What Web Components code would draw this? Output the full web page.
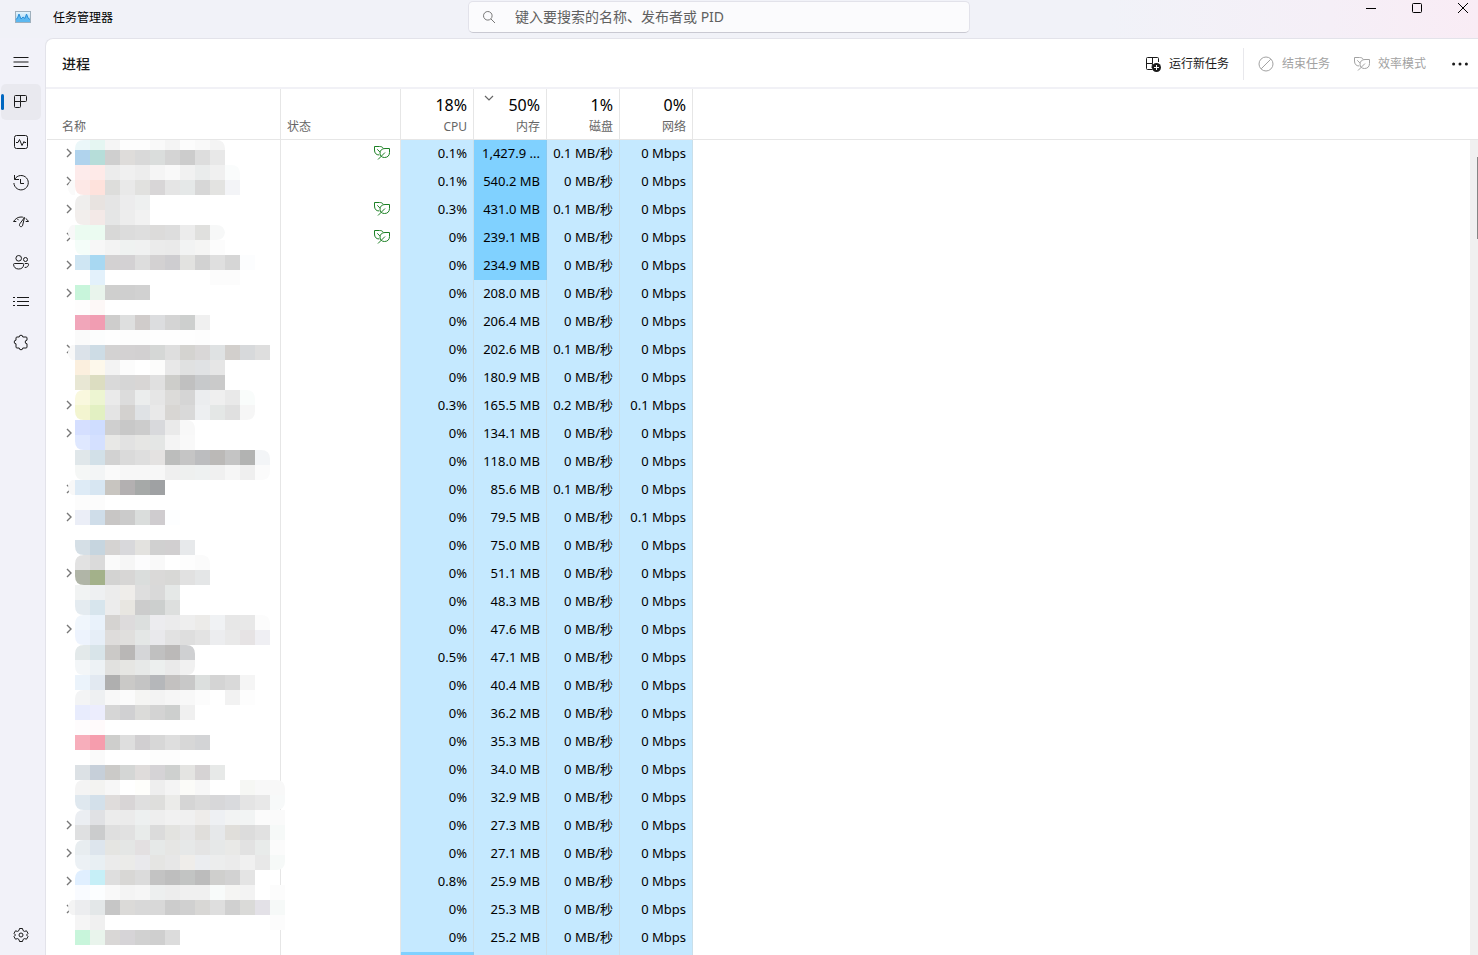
<!DOCTYPE html>
<html lang="zh-CN">
<head>
<meta charset="utf-8">
<title>任务管理器</title>
<style>
  html, body { margin: 0; height: 100%; overflow: hidden; }
  body { font: 12px/16px "Noto Sans", "Noto Sans CJK SC", sans-serif; color: #1a1a1a; background: #f1f2f8; }
</style>
</head>
<body>
<task-manager></task-manager>

<script>
const ICONS = {
  menu: '<path d="M.5 3.500h15M.5 8h15M.5 12.500h15" />',
  processes: '<path d="M2.5 1.5h10a1 1 0 0 1 1 1v4a1 1 0 0 1-1 1h-5v5a1 1 0 0 1-1 1h-4a1 1 0 0 1-1-1v-10a1 1 0 0 1 1-1zM7.5 1.5v6M1.5 7.5h6"/>',
  performance: '<rect x="1.5" y="1.5" width="13" height="13" rx="2"/><path d="M3 8.5h2l1.5-3 2.5 6 2-4 .5 1H13"/>',
  history: '<path d="M1.5 1v4.5H6M1.8 5.2A7.2 7.2 0 1 1 .9 9M7.5 5v4.5H11"/>',
  startup: '<path d="M.5 7.500C2.500 4.600 5 3 8 3c1 0 1.800.1 2.500.4M.5 7.500h2.800M5.500 6.200 4.500 5M12.700 4.500c1.200.700 2.100 1.700 2.800 3h-2.800M11.500 3.500 6.800 9.800c-1.300 2.200 1.200 4 2.700 2z"/>',
  users: '<circle cx="5.700" cy="4.300" r="2.800"/><circle cx="12.500" cy="5.500" r="2"/><path d="M1.500 9.500h8.400c.5 0 .8.3.8.8 0 3-2 4.700-5 4.700S.6 13.300.6 10.300c0-.5.4-.8.9-.8zM11.800 9.500h2.900c.5 0 .8.3.8.8 0 2-1.300 3.200-3.800 3.200"/>',
  details: '<path d="M4 3.500h12M4 7.500h12M4 11.500h12M0 3.500h2M0 7.500h2M0 11.500h2"/>',
  services: '<path d="M4 3h2.200a1.800 1.800 0 0 1 3.600 0H13a1 1 0 0 1 1 1v2.200a1.800 1.800 0 1 0 0 3.600V13a1 1 0 0 1-1 1H9.800a1.800 1.800 0 0 1-3.600 0H4a1 1 0 0 1-1-1V9.800a1.800 1.800 0 0 1 0-3.600V4a1 1 0 0 1 1-1z"/>',
  settings: '<circle cx="8" cy="8" r="2"/><path d="M6.500 1.500h3l.5 2 1.500.9 2-.6 1.500 2.600L13.500 8l1.500 1.600-1.500 2.600-2-.6-1.500.9-.5 2h-3l-.5-2-1.500-.9-2 .6L1 9.600 2.500 8 1 6.400l1.500-2.600 2 .6L6 3.500z" stroke-linejoin="round"/>',
  search: '<circle cx="6.800" cy="6.800" r="4.300"/><path d="m10 10 4 4"/>',
  run: '<path d="M7.500 13.500h-5a1 1 0 0 1-1-1v-10a1 1 0 0 1 1-1h10a1 1 0 0 1 1 1V6M7.500 1.500v6M1.500 7.500h6M7.500 7.500 7 12"/><circle cx="11.500" cy="11.500" r="4.500" fill="currentColor" stroke="none"/><path d="M9 11.500h5M11.500 9v5" stroke="#fff"/>',
  end: '<circle cx="8" cy="8" r="7"/><path d="m3.200 12.800 9.600-9.600"/>',
  leaf: '<path d="M9.200 3.200C8.500 2 7.300 1.500 5.500 1.500h-5V5c0 3.200 1.600 4.900 4.800 5M15.500 3.500H11C8 3.500 6 5.300 6 8.200c0 2.700 1.800 4.300 4.500 4.300 3.200 0 5-2 5-5zM4 14.500 11 7.500M3.300 4.300 5.900 7"/>',
  more: '<g fill="currentColor" stroke="none"><circle cx="1.600" cy="8" r="1.500"/><circle cx="8" cy="8" r="1.500"/><circle cx="14.400" cy="8" r="1.500"/></g>',
  minimize: '<path d="M3 8.500h10"/>',
  maximize: '<rect x="3.500" y="3.500" width="9" height="9" rx="1"/>',
  close: '<path d="m3 3 10 10M13 3 3 13"/>',
  expand: '<path d="m6 4 4 4-4 4" stroke-width="1.400"/>',
  sort: '<path d="m4 6 4 4 4-4" stroke-width="1.200"/>',
  app: '<defs><linearGradient id="g" x2="0" y2="1"><stop offset="0" stop-color="#e9f6fd"/><stop offset="1" stop-color="#8fd0f5"/></linearGradient></defs><g transform="translate(0 -1)"><rect x=".5" y="2.500" width="15" height="11" fill="url(#g)" stroke="#9fb0bd"/><path d="M1 12V9.500l1.500-.5L4 5l2 5 2-2 2 1.500L11.500 5 13 9l2 1.500V13H1z" fill="#5cb8f0" stroke="none"/><path d="M1 10.500 2.500 9 4 5l2 5 2-2 2 1.500L11.500 5 13 9l2 1.500" stroke="#2b8fd8"/></g>'
};

const define = (name, css, html, setup) => {
  const template = document.createElement('template');
  template.innerHTML = `<style>*{box-sizing:border-box}${css}</style>${html}`;
  customElements.define(name, class extends HTMLElement {
    constructor() {
      super();
      this.attachShadow({ mode: 'open' }).append(template.content.cloneNode(true));
    }
    connectedCallback() { if (setup) setup(this, this.shadowRoot); }
  });
};

define('ui-icon',
  `:host{display:block;flex:none;width:16px;height:16px}
   svg{display:block;width:100%;height:100%;overflow:visible;fill:none;stroke:currentColor}`,
  `<svg viewBox="0 0 16 16" aria-hidden="true"></svg>`,
  (host, root) => { root.querySelector('svg').innerHTML = ICONS[host.getAttribute('name')]; });

define('title-bar',
  `:host{display:flex;align-items:flex-start;height:38px;position:relative;overflow:hidden;
     background:linear-gradient(90deg,#f1f2f8 0 75%,#f5eff7 90%,#f9ecf5 100%)}
   .app{display:flex;align-items:center;gap:22px;padding:10px 0 0 15px;color:#000}
   label{position:absolute;left:calc(50% - 20px);transform:translateX(-50%);top:1px;width:min(34%,502px);height:32px;
     display:flex;align-items:center;gap:18px;padding:0 12px;background:#fbfbfd;border:1px solid #e2e2ea;border-bottom-color:#c9c9d2;border-radius:5px;color:#777}
   input{flex:1;min-width:0;border:0;outline:0;padding:0;background:none;font:14px/20px "Noto Sans","Noto Sans CJK SC",sans-serif;color:#1a1a1a}
   input::placeholder{color:#606060;opacity:1}
   .controls{display:flex;margin:0 -8px 0 auto;color:#000}
   button{width:46px;height:16px;padding:0;border:0;background:none;color:inherit;display:flex;justify-content:center;align-items:center}`,
  `<div class="app"><ui-icon name="app"></ui-icon><span>任务管理器</span></div>
   <label><ui-icon name="search"></ui-icon><input type="text" aria-label="搜索" placeholder="键入要搜索的名称、发布者或 PID"></label>
   <div class="controls">
     <button aria-label="最小化"><ui-icon name="minimize"></ui-icon></button>
     <button aria-label="最大化"><ui-icon name="maximize"></ui-icon></button>
     <button aria-label="关闭"><ui-icon name="close"></ui-icon></button>
   </div>`);

define('rail-button',
  `:host{display:block}
   button{position:relative;display:flex;align-items:center;justify-content:center;width:40px;height:36px;padding:0;border:0;border-radius:5px;background:none;color:#1a1a1a}
   :host([selected]) button{background:#e9e9ef}
   :host([selected]) button::before{content:"";position:absolute;left:0;top:10px;width:3px;height:16px;border-radius:2px;background:#0067c0}`,
  `<button><ui-icon></ui-icon></button>`,
  (host, root) => {
    root.querySelector('ui-icon').shadowRoot.querySelector('svg').innerHTML = ICONS[host.getAttribute('icon')];
    root.querySelector('button').setAttribute('aria-label', host.getAttribute('label'));
  });

define('nav-rail',
  `:host{display:flex;flex-direction:column;gap:4px;padding:6px 0 2px 1px;background:#f2f2f9}
   .end{margin-top:auto}`,
  `<rail-button icon="menu" label="打开导航"></rail-button>
   <rail-button icon="processes" label="进程" selected></rail-button>
   <rail-button icon="performance" label="性能"></rail-button>
   <rail-button icon="history" label="应用历史记录"></rail-button>
   <rail-button icon="startup" label="启动应用"></rail-button>
   <rail-button icon="users" label="用户"></rail-button>
   <rail-button icon="details" label="详细信息"></rail-button>
   <rail-button icon="services" label="服务"></rail-button>
   <rail-button class="end" icon="settings" label="设置"></rail-button>`);

define('page-toolbar',
  `:host{display:flex;align-items:center;height:50px;padding:2px 10px 0 16px;border-bottom:2px solid #f1f1f6}
   h1{margin:0 auto 0 0;font-size:14px;line-height:20px;font-weight:500}
   button{display:flex;align-items:center;gap:8px;padding:0;border:0;background:none;font:inherit;color:#1a1a1a;white-space:nowrap}
   button:disabled{color:#a2a2a2}
   i{width:1px;height:32px;margin:0 14px;background:#e8e8ec}
   .gap{margin-left:24px}
   .more{margin-left:26px}`,
  `<h1>进程</h1>
   <button><ui-icon name="run"></ui-icon>运行新任务</button><i></i>
   <button disabled><ui-icon name="end"></ui-icon>结束任务</button>
   <button class="gap" disabled><ui-icon name="leaf"></ui-icon>效率模式</button>
   <button class="more" aria-label="更多选项"><ui-icon name="more"></ui-icon></button>`);

/* Redacted names: 15px blocks, one line per 15px band.
   Line format: corners|left bump|colours; corners a,b,c,d = top-left, top-right, bottom-right, bottom-left. */
const MOSAIC = `
ab||ebf7f9 e5f6f2 f5f5f5 fdfdfd fdfdfd f9f9f9 f4f4f4 fcfcfc f9f9f9 f4f4f4
||b0d3ed b6ddd9 cfcfcf dedcda d9d9d9 dadddc d4d4d4 cccccc dddddd e8e8e8
b||fdebeb feeae8 ececec f0f0f0 ededed f5f5f5 f9f9f9 f1f1f1 eaecec f0f0f0 fafcfc
d|fafafa|fde8e6 fee2dc dddddb e9e9e9 e1e1df d8d6d7 e5e5e5 e5e8e8 d7d7d7 e3e3e1 f3f4f7
a||efeeed e8e3e0 e5e5e5 ececed eef0f0
d||f2eeec f3e9e7 e5e6e6 ededed f2f2f2
bc|f8f8f8|ebfbf1 ebfbf1 d8d8d7 dcdcdc dedede dcdbda dddddd ececec e0e0de f7f8f8
d||f4fdf9 f7f7f7 f3f3f3 eff2f1 f0f1f1 ebebeb eaeaea f2f3f3 f5f5f4 fcfcfc
||cfe6f3 a8d8f2 d3d1d2 d3d1d3 dddddd d3d1d2 cecdd0 e2e2e0 d2d2d2 dfdfdf d6d6d6 fcfdfe
||- e3f1fb - - - - - - - fcfcfc fcfcfc
||c8f5db e9f4ec cfcfce cfcfcf d1d1d1
||fefdfd fdf8f7
||f1a6ba f19db2 cecdcc dedfdf d0cccb dcdddf d4d4d4 cdcfce f0f0f0
||fafafa fcfdfd fefefe fdfdfd fdfdfd fefefe fefefe fefefe fdfdfd
|f8f8f8|dbe2e9 cddce5 d3d2d2 d3d1d2 d2d0d1 d5d7d6 dedede d4d3d0 d9d7d7 dfe2e3 d2cfcc d7d9db dedede
||fbefde fdf8eb f3f3f3 fcfcfc ffffff fcfcfb e8e8e8 e0e1e1 e0e2e4 e6e6e6
||e8e7d4 dcddc1 d9d9d9 d6d6d6 d8d6d5 e0e0e0 cdcdca c0c0c0 c7c9cb cacaca
ab||f9f8de edf5d2 eaeaea dcdcdc ebeded e6e6e6 dcdbd9 d5d5d5 ebedef efefef e9e9e9 f9fcfb
cd||f3f5d0 e2f0c2 e4e4e4 d3d1cf dfe2e5 e9e9e9 d8d6d3 d9d9d9 edeff1 e4e7e6 e0e0e0 f6f6f6
b||d5dfff cfddff cfcfcf c8c8c8 cccccc d8d9dc eaeaea f8f8f8
d||dfe8ff d4e0ff e8e8e6 e2e2e2 e6e6e4 e4e6e5 f4f4f4 f9f9f9
b||e0e7ea d2e0e8 d2d2d2 dadada dedede e4e2e1 bcbdbc c5c5c5 bcbdbf bbb9b7 c4c4c4 b2b3b2 f3f5f7
cd||f5f7f6 f3f5f6 fafafa f7f7f7 f7f7f7 f7f7f7 efefef eef0ef eef1f1 f0f0f0 f6f6f6 efefef fbfbfb
|f8f8f8|deebf6 d7e6f2 c8c5c0 b3b0b1 a6a9a8 9fa1a3
||fcfcfc fcfcfc
||ebeef7 cfdde9 c8c6c5 cbcbcb dadddc cfcccf fdfeff
||-
d||d5dfe6 c6d5df d5d3d2 d8d8db e3e2df d0d0d0 d1cfd0 e7e9eb
ab||e2e2e2 dadada fafafa f6f6f6 fcfcfd f9f9f9 ffffff fdfdfd fbfbfb
d||b0b5a7 a3b18a d3d3d2 d7d6d5 dadddc dad9d8 d8d8d6 e1e1e1 e4e6e7
||f1f3f3 eef0f2 ececec efedea dedede d9d9d9 e5e8e7
d||e4ebf0 d7e5ed ececec e8e6e1 cccccc cccfce dddfde
ab||f0f6fc e9f2fb d5d3d1 dddbdc dcdfde ececef ebebec eeeeee ecebe9 f0f2f4 e7e7e7 e8e8e8 fcfcfc
d||edf3fd e6eef7 dedcdb e0dfdd e4e7e6 e9e9ec e2e2e2 dedede e3e3e3 ecedef e9e9e9 e6e3e4 efeff3
ab||e3e9ea d8e4e9 cbc9c7 b9b7b6 d5d6d8 c0c0c0 bbb9b8 cfd0d2
cd||f3f6f8 edf2f5 e1e1df e6e6e3 e7e9e8 ecefee eaeaea f1f1f1
||ebf3fb e2e9f1 afafaf cac9c7 c4c4c4 b5b7ba c3c1c0 c8c8c8 dcdfde d4d4d4 d9d9d9 f5f5f5
a||f3f4f5 eef0f2 f8f8f8 fbfbfb f5f5f3 f3f3f3 f6f6f6 f8f8f8 fcfcfc - f2f2f2 fdfdfd
||e8ecfd ecedfd d6d6d6 d0d0d2 dbdbd9 d3d3d3 cdcfce f0f0f0
||fefcfd fffafb
||f7aebb f69dad cececc dedede d1cfd1 d7d7d7 dedede d7d7d7 d3d4d6
||- fafafa - - - fdfdfd fdfdfd
||dce1e5 c6cfd9 cbcac8 d4d6d5 dfdcdb d5d3d6 ced0cf e4e4e2 d6d3d4 e7e9e8
ab||f4f4f4 f3f3f1 f7f7f7 ffffff fefefb eeeeee f4f4f4 fbfbf8 f7f7f7 - - f6f7f4 f8f8f8 f8f8f8
cd||dfe8ef d3e0ea dfdcdb d8d5d6 dfdfdf dededc ebebe9 d5d5d5 dadada d7d7d9 d9dadd e4e4e4 e8e8e8 f7f9f9
a||ebeef2 e0e1e4 ececec ebebeb edf0f0 eeeeee f1f1f1 f0f0f0 eeecea eef0f3 f2f3f3 f2f4f4 fbfbfb fafafa
||dfe0e1 cbcccd dfdfdf e1e1e1 e8ebea dbdbdb e3e3e0 e6e6e6 e0dedb e6e8ea e0deda dcdcdc e1e1e1 f6f9f8
a||e8edf0 dde5ed e5e5e2 e4e6e5 e3e0e1 e6e9e8 e6e6e4 e6e8e8 e4e4e4 e6e8e8 e9e9e7 e2e2e2 e8ebea fbfbfb
cd||ecf1f5 e8eff3 ebebeb ebebe9 e9e9ec e5e5e3 e7e7e7 efedea ebedf0 eceded ebebeb f0f0f0 e8e8e8 f6f9f8
a||e0efff c6eff7 dedede d8d7d5 dbdbdb c3c3c3 bebebe c2c4c3 bcbcbc cfcfcd d2d2d2 e4e4e4
||f9fbff fcfeff f9f9f9 f4f4f4 f6f6f6 edefef ededed f0f0f0 f0f0f0 f8fbfa f5f5f3 f3f3f3 - fcfcfc
|f4f4f4|ecedef e3e7e8 c6c6c6 dbdad8 d8d8d8 d8d8d8 cccccc d0d0d0 d8d7d5 dedede d0d0d0 dadad8 e3e1e7 f6f9f8
||f5f5f5 f0f0f0 - - - - - - - - - - - fcfcfc
||c8f5db e9f4ec d9d7d6 d6d4d7 d1d1d1 cfcfcf dcdcdc`.trim().split('\n');

define('name-mosaic',
  `:host{display:block;pointer-events:none}svg{display:block}`,
  `<svg width="220" height="820" viewBox="0 0 220 820" aria-hidden="true"></svg>`,
  (host, root) => {
    const size = 15, inset = 8;
    let out = '';
    MOSAIC.forEach((line, row) => {
      const [corners, bump, list] = line.split('|');
      const cells = list.split(' ');
      const y = row * size - 5, top = Math.max(y, 0), h = y + size - top;
      if (bump) out += `<path d="M8 ${y}v${h}h-3q-4-3-4-7.500t4-7.500z" fill="#${bump}"/>`;
      cells.forEach((colour, col) => {
        if (colour === '-') return;
        const first = col === 0, last = col === cells.length - 1;
        const r = (k, on) => on && corners.includes(k) ? 9 : 0;
        const a = r('a', first), d = r('d', first), b = r('b', last), c = r('c', last);
        const x = inset + col * size;
        out += `<path fill="#${colour}" d="M${x + a} ${top}H${x + size - b}q${b} 0 ${b} ${b}V${top + h - c}q0 ${c} ${-c} ${c}H${x + d}q${-d} 0 ${-d} ${-d}V${top + a}q0 ${-a} ${a} ${-a}z"/>`;
      });
    });
    root.querySelector('svg').innerHTML = out;
  });

const MEMORY = ['1,427.9 ...', '540.2 MB', '431.0 MB', '239.1 MB', '234.9 MB', '208.0 MB', '206.4 MB', '202.6 MB', '180.9 MB', '165.5 MB', '134.1 MB', '118.0 MB', '85.6 MB', '79.5 MB', '75.0 MB', '51.1 MB', '48.3 MB', '47.6 MB', '47.1 MB', '40.4 MB', '36.2 MB', '35.3 MB', '34.0 MB', '32.9 MB', '27.3 MB', '27.1 MB', '25.9 MB', '25.3 MB', '25.2 MB', ''];
const CPU = { 0: '0.1%', 1: '0.1%', 2: '0.3%', 9: '0.3%', 18: '0.5%', 26: '0.8%' };
const DISK = { 0: '0.1', 2: '0.1', 7: '0.1', 9: '0.2', 12: '0.1' };
const NETWORK = { 9: '0.1', 13: '0.1' };
const GROUPS = new Set([0, 1, 2, 3, 4, 5, 7, 9, 10, 12, 13, 15, 17, 24, 25, 26, 27]);
const EFFICIENT = new Set([0, 2, 3]);

define('process-table',
  `:host{display:block;position:relative;overflow:hidden;min-height:0;margin-left:1px}
   table{width:100%;table-layout:fixed;border-collapse:separate;border-spacing:0}
   .name{width:234px}.status{width:120px}.metric{width:73px}
   th{position:relative;height:51px;padding:0 6px 4px;vertical-align:bottom;text-align:right;font-weight:400;color:#666;border-right:1px solid #e6e6e6;border-bottom:1px solid #e6e6e6}
   th.left{text-align:left}
   th:first-child{padding-left:15px}
   th:last-child,td:last-child{border-right:0}
   th b{display:block;margin-bottom:4px;font-size:16px;line-height:20px;font-weight:400;color:#000}
   th ui-icon{position:absolute;left:7px;top:1px}
   td{height:28px;padding:0 6px 2px;border-right:1px solid #e6e6e6;text-align:right;font-size:13px;line-height:20px;white-space:nowrap;color:#000}
   td:first-child{padding-left:14px;color:#777}
   td:nth-child(2){padding-right:10px;color:#1c8024}
   td:nth-child(2) ui-icon{margin-left:auto}
   td:nth-child(n+3):nth-child(-n+6){background:#c5e9ff;border-right-color:#c9dfea}
   td.hot.hot{background:#80d1ff;border-right-color:#8ccbf0}
   name-mosaic{position:absolute;left:20px;top:51px}
   button{display:block;padding:0;border:0;background:none;color:inherit}`,
  `<table>
     <colgroup><col class="name"><col class="status"><col class="metric"><col class="metric"><col class="metric"><col class="metric"><col></colgroup>
     <thead><tr><th class="left">名称</th><th class="left">状态</th><th><b>18%</b>CPU</th>
       <th aria-sort="descending"><ui-icon name="sort"></ui-icon><b>50%</b>内存</th><th><b>1%</b>磁盘</th><th><b>0%</b>网络</th><th></th></tr></thead>
     <tbody></tbody>
   </table>
   <name-mosaic></name-mosaic>`,
  (host, root) => {
    root.querySelector('tbody').innerHTML = MEMORY.map((memory, i) => memory
      ? `<tr><td>${GROUPS.has(i) ? '<button aria-label="展开"><ui-icon name="expand"></ui-icon></button>' : ''}</td>
         <td>${EFFICIENT.has(i) ? '<ui-icon name="leaf"></ui-icon>' : ''}</td>
         <td>${CPU[i] || '0%'}</td><td class="${i < 5 ? 'hot' : ''}">${memory}</td>
         <td>${DISK[i] || '0'} MB/秒</td><td>${NETWORK[i] || '0'} Mbps</td><td></td></tr>`
      : '<tr><td></td><td></td><td class="hot"></td><td></td><td></td><td></td><td></td></tr>').join('');
  });

define('scroll-track',
  `:host{display:block;width:8px;margin-top:51px;padding:17px 0 0 7px;background:#f0f0f0}
   div{height:82px;background:#858585}`,
  `<div></div>`);

define('task-manager',
  `:host{display:grid;grid-template:38px minmax(0,1fr)/45px minmax(0,1fr);height:100vh}
   title-bar{grid-column:1/-1}
   main{display:grid;grid-template-rows:auto minmax(0,1fr);min-width:0;background:#fff;border:solid #e3e3ea;border-width:1px 0 0 1px;border-radius:8px 0 0 0;overflow:hidden}
   .body{display:grid;grid-template-columns:minmax(0,1fr) 8px;min-height:0;position:relative}
   .body::after{content:"";position:absolute;right:0;top:50px;width:8px;height:1px;background:#e6e6e6}`,
  `<title-bar></title-bar>
   <nav-rail></nav-rail>
   <main>
     <page-toolbar></page-toolbar>
     <div class="body"><process-table></process-table><scroll-track></scroll-track></div>
   </main>`);
</script>
</body>
</html>
